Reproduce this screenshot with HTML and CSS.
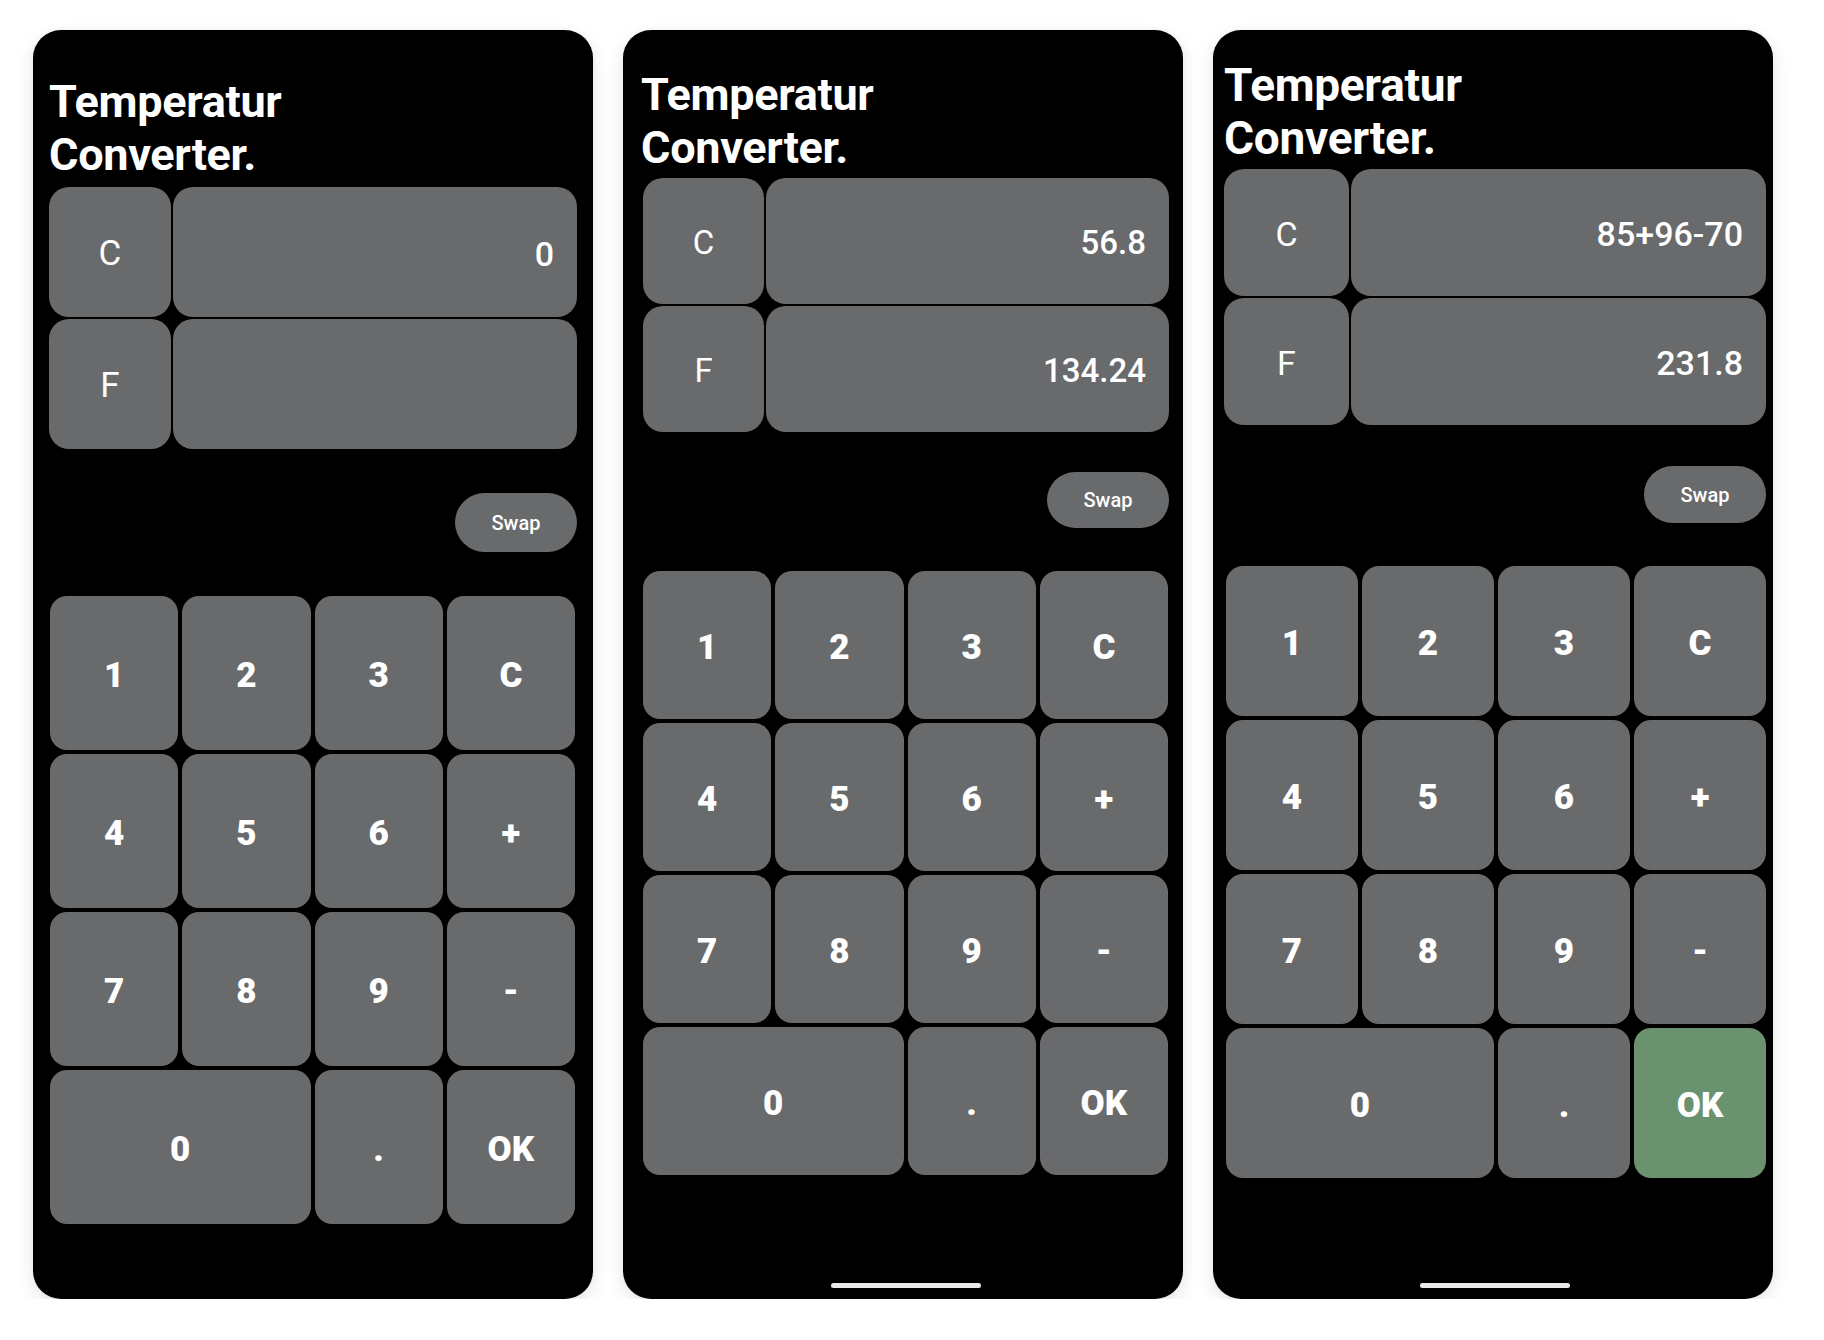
FILE: index.html
```html
<!DOCTYPE html>
<html lang="de">
<head>
<meta charset="utf-8">
<title>Temperatur Converter</title>
<link rel="stylesheet" href="styles.css">
</head>
<body>
<div class="stage">

  <section class="phone p1">
    <h1 class="title">Temperatur<br>Converter.</h1>
    <div class="conv">
      <div class="unit">C</div><div class="val">0</div>
      <div class="unit">F</div><div class="val"></div>
    </div>
    <button class="swap">Swap</button>
    <div class="pad">
      <div class="key">1</div><div class="key">2</div><div class="key">3</div><div class="key">C</div>
      <div class="key">4</div><div class="key">5</div><div class="key">6</div><div class="key">+</div>
      <div class="key">7</div><div class="key">8</div><div class="key">9</div><div class="key">-</div>
      <div class="key wide">0</div><div class="key">.</div><div class="key">OK</div>
    </div>
  </section>

  <section class="phone p2">
    <h1 class="title">Temperatur<br>Converter.</h1>
    <div class="conv">
      <div class="unit">C</div><div class="val">56.8</div>
      <div class="unit">F</div><div class="val">134.24</div>
    </div>
    <button class="swap">Swap</button>
    <div class="pad">
      <div class="key">1</div><div class="key">2</div><div class="key">3</div><div class="key">C</div>
      <div class="key">4</div><div class="key">5</div><div class="key">6</div><div class="key">+</div>
      <div class="key">7</div><div class="key">8</div><div class="key">9</div><div class="key">-</div>
      <div class="key wide">0</div><div class="key">.</div><div class="key">OK</div>
    </div>
    <div class="homebar"></div>
  </section>

  <section class="phone p3">
    <h1 class="title">Temperatur<br>Converter.</h1>
    <div class="conv">
      <div class="unit">C</div><div class="val">85+96-70</div>
      <div class="unit">F</div><div class="val">231.8</div>
    </div>
    <button class="swap">Swap</button>
    <div class="pad">
      <div class="key">1</div><div class="key">2</div><div class="key">3</div><div class="key">C</div>
      <div class="key">4</div><div class="key">5</div><div class="key">6</div><div class="key">+</div>
      <div class="key">7</div><div class="key">8</div><div class="key">9</div><div class="key">-</div>
      <div class="key wide">0</div><div class="key">.</div><div class="key ok">OK</div>
    </div>
    <div class="homebar"></div>
  </section>

</div>
</body>
</html>
```
FILE: styles.css
```css
html, body {
  margin: 0;
  padding: 0;
  background: #ffffff;
  font-family: Roboto, "Noto Sans", "Liberation Sans", sans-serif;
}

.stage {
  display: flex;
  gap: 30px;
  padding: 30px 0 0 33px;
}

.phone {
  --pl: 16px;
  --pr: 16px;
  --title-top: 45px;
  --title-size: 45px;
  --title-ml: 0px;
  --title-gap: 6px;
  --row-h: 130px;
  --label-w: 122px;
  --label-size: 35px;
  --val-size: 34px;
  --swap-mt: 44px;
  --swap-h: 59px;
  --pad-mt: 44px;
  --key-h: 154px;
  --pad-ml: 1px;
  --pad-mr: 2px;

  box-sizing: border-box;
  width: 560px;
  height: 1269px;
  background: #000000;
  border-radius: 28px;
  box-shadow: 0 6px 18px rgba(0, 0, 0, 0.10), 0 0 4px rgba(0, 0, 0, 0.05);
  display: flex;
  flex-direction: column;
  padding: var(--title-top) var(--pr) 0 var(--pl);
}

.p2 {
  --pl: 20px;
  --pr: 14px;
  --title-top: 38px;
  --title-size: 45px;
  --title-ml: -2px;
  --title-gap: 4px;
  --row-h: 126px;
  --label-w: 121px;
  --label-size: 33px;
  --val-size: 33px;
  --swap-mt: 40px;
  --swap-h: 56px;
  --pad-mt: 43px;
  --key-h: 148px;
  --pad-ml: 0px;
  --pad-mr: 1px;
}

.p3 {
  --pl: 11px;
  --pr: 7px;
  --title-top: 29px;
  --title-size: 46px;
  --title-ml: 0px;
  --title-gap: 4px;
  --row-h: 127px;
  --label-w: 125px;
  --label-size: 34px;
  --val-size: 34px;
  --swap-mt: 41px;
  --swap-h: 57px;
  --pad-mt: 43px;
  --key-h: 150px;
  --pad-ml: 2px;
  --pad-mr: 0px;
}

.title {
  margin: 0 0 var(--title-gap) var(--title-ml);
  color: #ffffff;
  font-family: Roboto, "Liberation Sans", sans-serif;
  font-weight: 700;
  font-size: var(--title-size);
  line-height: 53px;
  letter-spacing: -0.3px;
}

.conv {
  display: grid;
  grid-template-columns: var(--label-w) 1fr;
  grid-auto-rows: var(--row-h);
  gap: 2px;
}

.unit,
.val {
  background: #696a6c;
  border-radius: 20px;
  color: #ffffff;
  display: flex;
  align-items: center;
  padding-top: 3px;
  box-sizing: border-box;
}

.unit {
  justify-content: center;
  font-size: var(--label-size);
  font-weight: 400;
}

.val {
  justify-content: flex-end;
  padding-right: 23px;
  font-size: var(--val-size);
  font-weight: 500;
}

.swap {
  align-self: flex-end;
  margin-top: var(--swap-mt);
  width: 122px;
  height: var(--swap-h);
  border: none;
  border-radius: 30px;
  background: #696a6c;
  color: #ffffff;
  font-family: Roboto, "Liberation Sans", sans-serif;
  font-size: 20px;
  font-weight: 500;
  padding: 0;
}

.pad {
  display: grid;
  grid-template-columns: repeat(4, 1fr);
  grid-auto-rows: var(--key-h);
  gap: 4px;
  margin: var(--pad-mt) var(--pad-mr) 0 var(--pad-ml);
}

.key {
  background: #696a6c;
  border-radius: 17px;
  color: #ffffff;
  display: flex;
  align-items: center;
  justify-content: center;
  padding-top: 4px;
  box-sizing: border-box;
  font-size: 35px;
  font-weight: 900;
}

.key.wide {
  grid-column: span 2;
}

.key.ok {
  background: #6a926e;
}

.homebar {
  margin-top: auto;
  margin-bottom: 11px;
  align-self: center;
  width: 150px;
  height: 5px;
  border-radius: 3px;
  background: #e8e8e8;
}
```
